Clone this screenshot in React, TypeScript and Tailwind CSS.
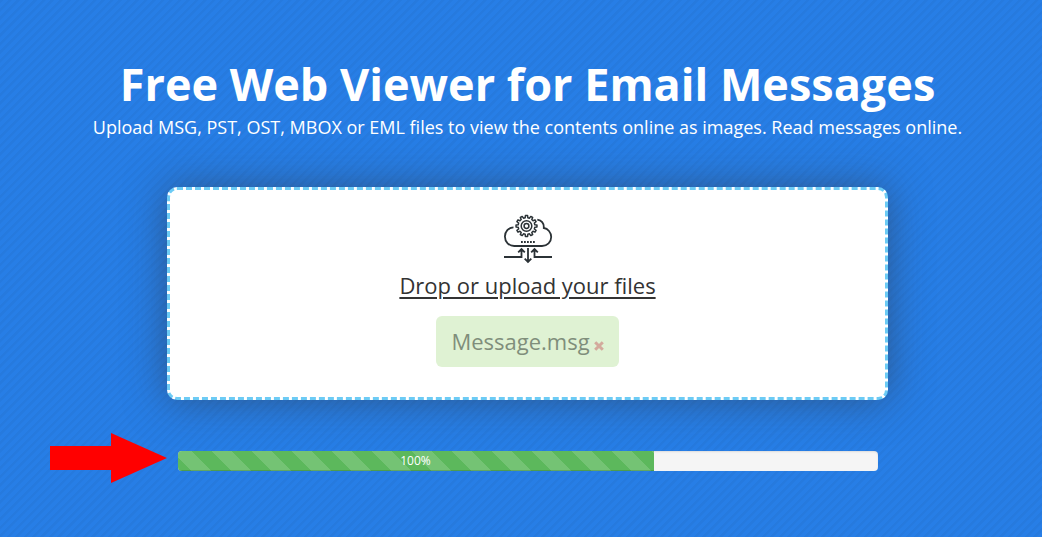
const gearPoints = Array.from({ length: 12 }, (_, tooth) =>
  [
    [-9, 8.4],
    [-6, 10.5],
    [6, 10.5],
    [9, 8.4],
  ].map(([offset, radius]) => {
    const angle = ((tooth * 30 + offset) * Math.PI) / 180;
    return `${22.5 + radius * Math.sin(angle)},${11 - radius * Math.cos(angle)}`;
  }),
)
  .flat()
  .join(" ");

function CloudIcon() {
  return (
    <svg viewBox="0 0 48 48" className="block h-12 w-12 overflow-visible" fill="none" stroke="#2b3236" strokeWidth="1.8" aria-hidden="true">
      <path d="M9.500 12.400 C4.500 12.500 .9 16.500 .9 21.600 C.9 27 5 31 10.200 31 H38 C43.300 31 47.200 27 47.200 22.100 C47.200 17.300 43.800 13.600 39.800 13 C40 8.500 37.500 5.200 33.300 4.600" />
      <polygon points={gearPoints} strokeWidth="1.500" strokeLinejoin="round" />
      <circle cx="22.500" cy="11" r="5.300" strokeWidth="1.500" />
      <circle cx="22.500" cy="11" r="2.400" strokeWidth="1.500" />
      <path d="M17 27H31" strokeWidth="1.800" strokeDasharray="1.800 1.200" />
      <path d="M0 42H17.500V34.500M14.200 37.400L17.500 34L20.800 37.400M24 33V47M20.700 43.600L24 47L27.300 43.600M48 42H30.500V34.500M27.200 37.400L30.500 34L33.800 37.400" />
    </svg>
  );
}

export default function App() {
  return (
    <main className="min-h-screen bg-[#277ee6] bg-[repeating-linear-gradient(135deg,rgba(0,0,0,0.035)_0px,rgba(0,0,0,0.035)_2px,transparent_3px,transparent_6px)] pt-[57px] pb-16 pl-[13px] font-['Open_Sans',sans-serif] text-white">
      <header className="text-center">
        <h1 className="text-[45px] leading-[54px] font-bold">Free Web Viewer for Email Messages</h1>
        <p className="text-[18px] leading-8">
          Upload MSG, PST, OST, MBOX or EML files to view the contents online as images. Read messages online.
        </p>
      </header>

      <section className="mx-auto mt-11 flex max-w-[721px] flex-col items-center rounded-[10px] border-3 border-dashed border-[#6ccbf5] bg-white px-6 pt-[25px] pb-[30px] shadow-[0_0_40px_rgba(49,50,51,0.5)]">
        <CloudIcon />
        <button type="button" className="mt-1 text-[22px] leading-9 text-[#333] underline decoration-2 underline-offset-[3px]">
          Drop or upload your files
        </button>
        <div className="mt-[13px] flex items-center gap-1 rounded-md bg-[#dff2d3] px-[15px] text-[#7f8e7b]">
          <span className="text-[22px] leading-[51px]">Message.msg</span>
          <button type="button" aria-label="Remove Message.msg" className="pt-2">
            <svg viewBox="0 0 10 10" className="block h-[10px] w-[10px]" fill="none" stroke="#d3aa9c" strokeWidth="3" aria-hidden="true">
              <path d="M1.200 1.200L8.800 8.800M8.800 1.200L1.200 8.800" />
            </svg>
          </button>
        </div>
      </section>

      <div className="relative mx-auto mt-[51px] max-w-[700px]">
        <svg viewBox="0 0 117 50" className="absolute right-full -top-[18px] mr-[11px] h-[50px] w-[117px]" fill="#f00" aria-hidden="true">
          <path d="M0 13H61V0L117 25L61 50V37H0Z" />
        </svg>
        <div role="progressbar" aria-label="Upload progress" aria-valuenow={100} className="h-5 overflow-hidden rounded bg-[#f5f5f5] shadow-[inset_0_1px_2px_rgba(0,0,0,0.1)]">
          <div className="h-full w-[68%] bg-[#5cb85c] bg-[linear-gradient(45deg,rgba(255,255,255,0.15)_25%,transparent_25%,transparent_50%,rgba(255,255,255,0.15)_50%,rgba(255,255,255,0.15)_75%,transparent_75%,transparent)] bg-size-[40px_40px] bg-position-[-6px_0px] text-center text-[12px] leading-5 shadow-[inset_0_-1px_0_rgba(0,0,0,0.15)]">
            100%
          </div>
        </div>
      </div>
    </main>
  );
}
